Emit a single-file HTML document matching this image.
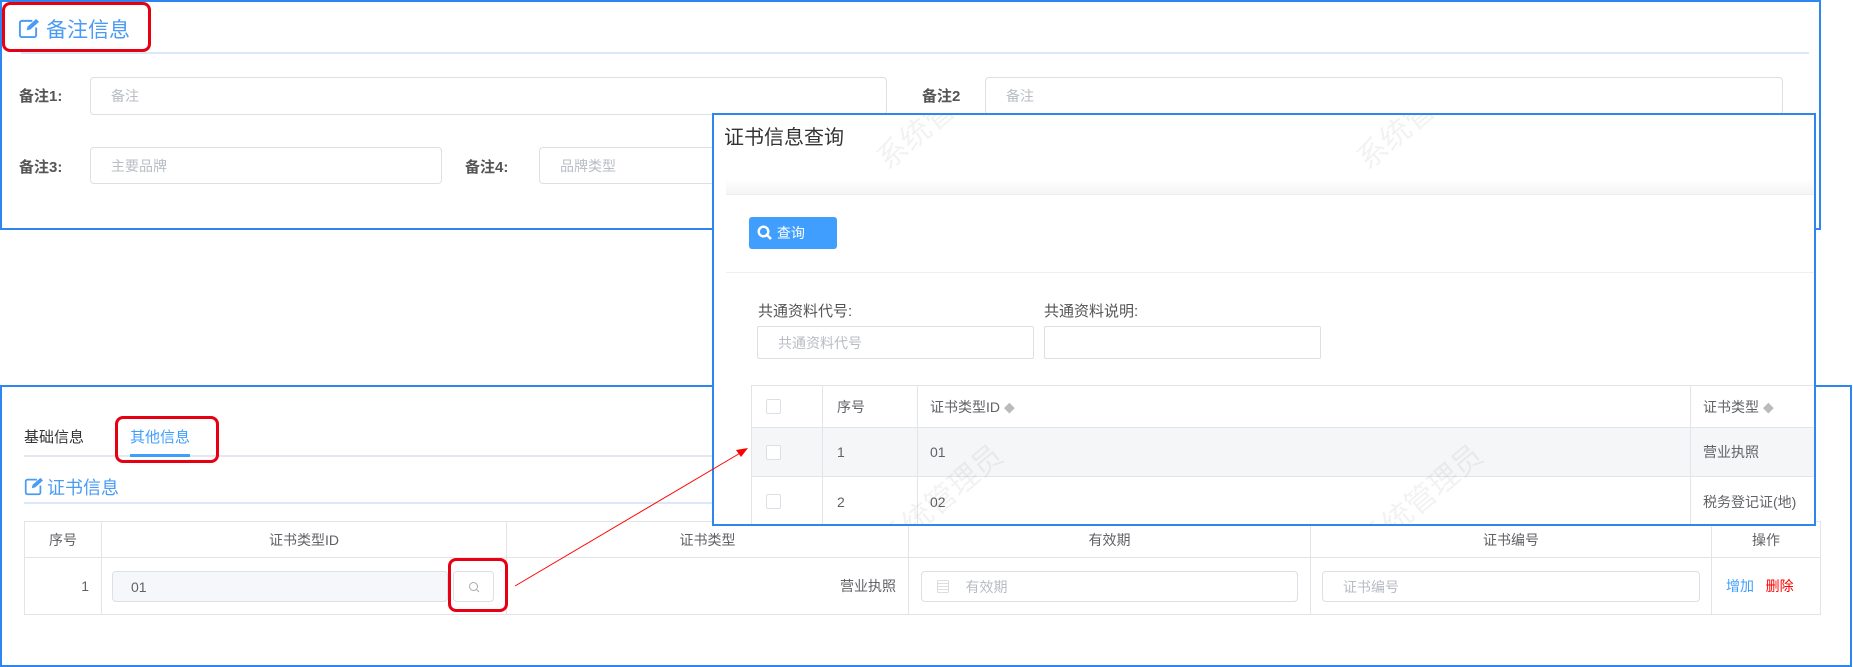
<!DOCTYPE html>
<html><head><meta charset="utf-8"><style>
*{box-sizing:border-box;margin:0;padding:0}
body{width:1853px;height:667px;background:#fff;position:relative;overflow:hidden;font-family:"Liberation Sans","Noto Sans CJK SC",sans-serif;color:#606266}
.a{position:absolute}
.inp{position:absolute;border:1px solid #dcdfe6;border-radius:4px;background:#fff;font-size:14px;color:#b8bcc4;padding-left:20px;display:flex;align-items:center}
.lbl{position:absolute;font-size:15px;font-weight:bold;color:#555}
.red{position:absolute;border:3px solid #e60012;border-radius:8px}
table{border-collapse:collapse;position:absolute;font-size:14px}
td{border:1px solid #e2e4e8}
.wm{position:absolute;font-size:30px;color:rgba(0,0,0,0.05);transform:rotate(-40deg);white-space:nowrap}
</style></head><body>

<!-- top panel -->
<div class="a" style="left:0;top:0;width:1821px;height:230px;border:2px solid #2e86f0"></div>
<svg class="a" style="left:18px;top:18px" width="21" height="21" viewBox="0 0 22 22"><path d="M15 3H4a2 2 0 0 0-2 2v13a2 2 0 0 0 2 2h13a2 2 0 0 0 2-2V10" fill="none" stroke="#4a9bf5" stroke-width="2"/><path d="M9 13l1-4 9-8 3 3-9 8z" fill="#4a9bf5"/></svg>
<div class="a" style="left:46px;top:14px;font-size:21px;color:#4a9bf5">备注信息</div>
<div class="red" style="left:2px;top:2px;width:149px;height:50px"></div>
<div class="a" style="left:21px;top:52px;width:1788px;height:2px;background:#dbe8fa"></div>
<div class="lbl" style="left:19px;top:85px">备注1:</div>
<div class="inp" style="left:90px;top:77px;width:797px;height:38px">备注</div>
<div class="lbl" style="left:922px;top:85px">备注2</div>
<div class="inp" style="left:985px;top:77px;width:798px;height:38px">备注</div>
<div class="lbl" style="left:19px;top:156px">备注3:</div>
<div class="inp" style="left:90px;top:147px;width:352px;height:37px">主要品牌</div>
<div class="lbl" style="left:465px;top:156px">备注4:</div>
<div class="inp" style="left:539px;top:147px;width:300px;height:37px">品牌类型</div>

<!-- bottom panel -->
<div class="a" style="left:0;top:385px;width:1852px;height:282px;border:2px solid #2e86f0;background:#fff"></div>
<div class="a" style="left:24px;top:426px;font-size:15px;color:#333">基础信息</div>
<div class="a" style="left:130px;top:426px;font-size:15px;color:#409eff">其他信息</div>
<div class="a" style="left:24px;top:455px;width:1790px;height:2px;background:#e4e7ed"></div>
<div class="a" style="left:130px;top:454px;width:60px;height:3px;background:#409eff"></div>
<div class="red" style="left:115px;top:416px;width:104px;height:47px"></div>
<svg class="a" style="left:24px;top:477px" width="19" height="19" viewBox="0 0 22 22"><path d="M15 3H4a2 2 0 0 0-2 2v13a2 2 0 0 0 2 2h13a2 2 0 0 0 2-2V10" fill="none" stroke="#4a9bf5" stroke-width="2"/><path d="M9 13l1-4 9-8 3 3-9 8z" fill="#4a9bf5"/></svg>
<div class="a" style="left:47px;top:474px;font-size:18px;color:#4a9bf5">证书信息</div>
<div class="a" style="left:24px;top:502px;width:1790px;height:2px;background:#dbe8fa"></div>
<table style="left:24px;top:521px;width:1797px">
<tr style="height:36px;color:#606266;text-align:center"><td style="width:77px">序号</td><td style="width:405px">证书类型ID</td><td style="width:402px">证书类型</td><td style="width:402px">有效期</td><td style="width:401px">证书编号</td><td>操作</td></tr>
<tr style="height:57px"><td style="text-align:right;padding-right:12px">1</td><td></td><td style="text-align:right;padding-right:12px">营业执照</td><td></td><td></td><td style="padding-left:14px"><span style="color:#409eff">增加</span>&nbsp;&nbsp;&nbsp;<span style="color:#f00">删除</span></td></tr>
</table>
<div class="inp" style="left:112px;top:571px;width:336px;height:31px;background:#f5f7fa;color:#606266;padding-left:18px">01</div>
<div class="inp" style="left:453px;top:571px;width:41px;height:31px;justify-content:center;padding:0"><svg width="12" height="12" viewBox="0 0 12 12"><circle cx="5.5" cy="5.5" r="4" fill="none" stroke="#aaa" stroke-width="1"/><path d="M8.5 8.5l2.5 2.5" stroke="#aaa"/></svg></div>
<div class="red" style="left:448px;top:558px;width:60px;height:54px"></div>
<div class="inp" style="left:921px;top:571px;width:377px;height:31px;padding-left:14px">▤&nbsp;&nbsp;&nbsp;&nbsp;有效期</div>
<div class="inp" style="left:1322px;top:571px;width:378px;height:31px">证书编号</div>

<!-- dialog -->
<div class="a" style="left:712px;top:113px;width:1104px;height:413px;border:2px solid #2e86f0;background:#fff;overflow:hidden">
 <div class="a" style="left:10px;top:6px;font-size:20px;color:#333">证书信息查询</div>
 <div class="a" style="left:12px;top:64px;width:1100px;height:16px;background:linear-gradient(#fff,#f4f4f4)"></div>
 <div class="a" style="left:12px;top:79px;width:1100px;height:340px;border-top:1px solid #eee"></div>
 <div class="a" style="left:35px;top:102px;width:88px;height:32px;background:#409eff;border-radius:3px;color:#fff;font-size:14px;display:flex;align-items:center;padding-left:8px"><svg width="16" height="16" viewBox="0 0 16 16"><circle cx="6.5" cy="6.5" r="4.8" fill="none" stroke="#fff" stroke-width="2.4"/><path d="M10 10l4 4" stroke="#fff" stroke-width="2.6"/></svg>&nbsp;查询</div>
 <div class="a" style="left:12px;top:157px;width:1100px;height:1px;background:#eee"></div>
 <div class="a" style="left:44px;top:185px;font-size:15px;color:#555">共通资料代号:</div>
 <div class="a" style="left:330px;top:185px;font-size:15px;color:#555">共通资料说明:</div>
 <div class="inp" style="left:43px;top:211px;width:277px;height:33px;border-radius:2px">共通资料代号</div>
 <div class="inp" style="left:330px;top:211px;width:277px;height:33px;border-radius:2px"></div>
 <table style="left:37px;top:270px;width:1080px;color:#606266">
 <tr style="height:42px"><td style="width:71px;padding-left:14px"><div style="width:15px;height:15px;border:1px solid #dcdfe6;border-radius:2px"></div></td><td style="width:95px;padding-left:14px">序号</td><td style="width:773px;padding-left:12px">证书类型ID <span style="color:#bbb;font-size:11px">◆</span></td><td style="padding-left:12px">证书类型 <span style="color:#bbb;font-size:11px">◆</span></td></tr>
 <tr style="height:49px;background:#f5f6f8"><td style="padding-left:14px"><div style="width:15px;height:15px;border:1px solid #dcdfe6;border-radius:2px;background:#fff"></div></td><td style="padding-left:14px">1</td><td style="padding-left:12px">01</td><td style="padding-left:12px">营业执照</td></tr>
 <tr style="height:50px"><td style="padding-left:14px"><div style="width:15px;height:15px;border:1px solid #dcdfe6;border-radius:2px"></div></td><td style="padding-left:14px">2</td><td style="padding-left:12px">02</td><td style="padding-left:12px">税务登记证(地)</td></tr>
 </table>
 <div class="wm" style="left:150px;top:360px">系统管理员</div>
 <div class="wm" style="left:630px;top:360px">系统管理员</div>
 <div class="wm" style="left:155px;top:-5px">系统管</div>
 <div class="wm" style="left:635px;top:-5px">系统管</div>
</div>

<!-- arrow -->
<svg class="a" style="left:0;top:0" width="1853" height="667"><line x1="515" y1="586" x2="742" y2="452" stroke="#f00" stroke-width="1"/><path d="M748 448l-12 2 5 7z" fill="#f00"/></svg>
</body></html>
